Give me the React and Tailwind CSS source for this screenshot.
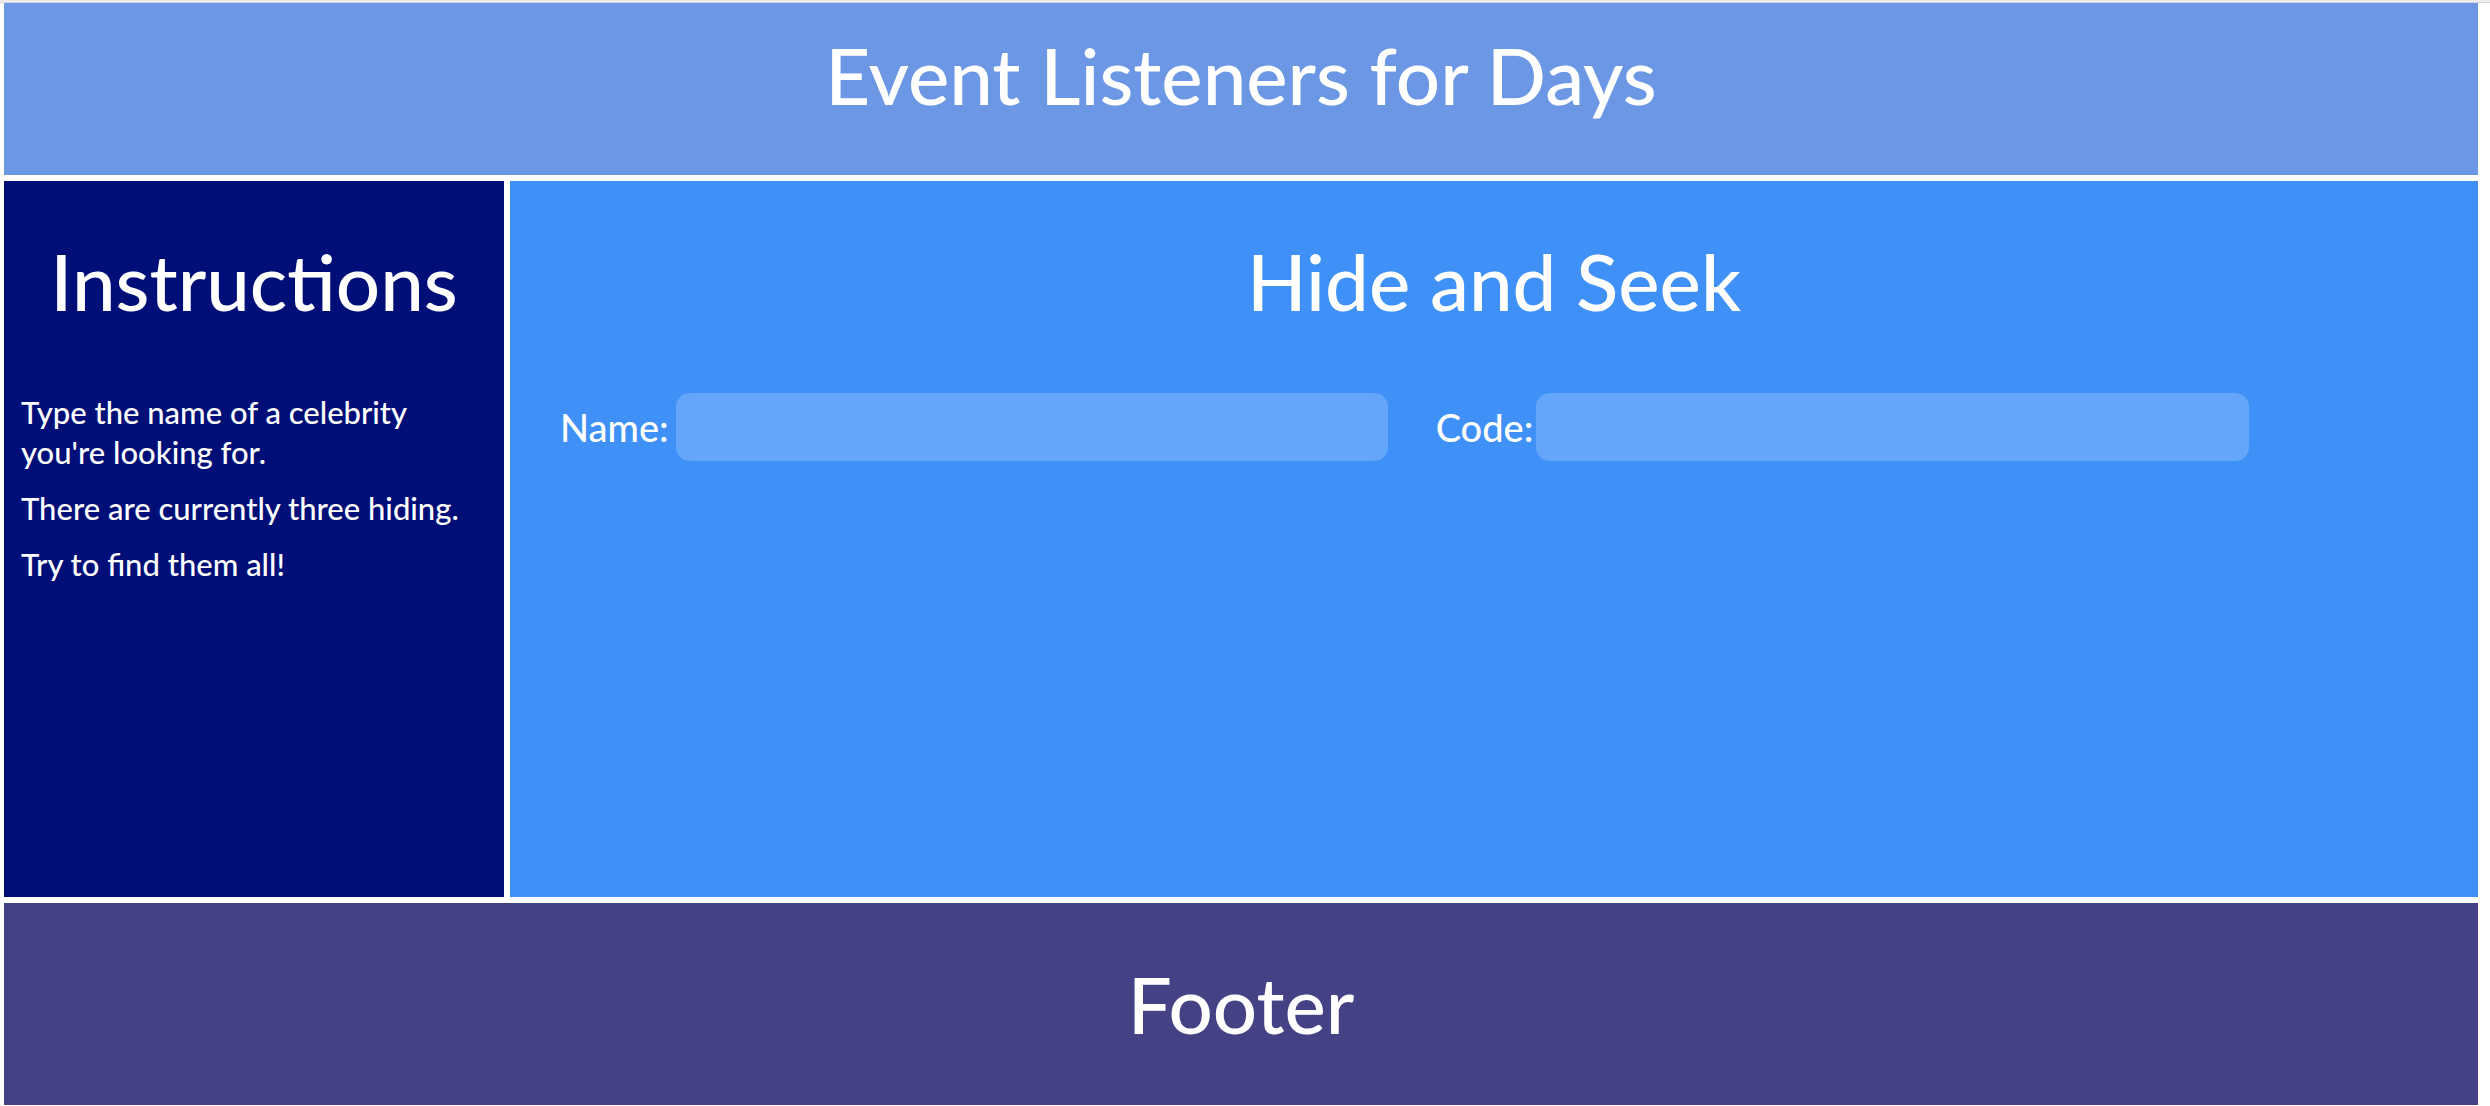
export default function App() {
  const font = { fontFamily: "Lato, 'Open Sans', sans-serif" };
  return (
    <div className="w-[2490px] h-[1106px] bg-white overflow-hidden text-white font-medium" style={font}>
      <div className="h-[3px] bg-[#ededed] border-b border-[#d4d4d4]"></div>
      <div className="pl-[4px] pr-[12px] flex flex-col gap-[6px]">
        <header className="h-[172px] bg-[#6c97e5] flex justify-center pt-[33px]">
          <h1 className="text-[78px] leading-none h-fit">Event Listeners for Days</h1>
        </header>
        <div className="h-[716px] flex gap-[6px]">
          <aside className="w-[500px] shrink-0 bg-[#000e77] px-[17px]">
            <h2 className="text-[78px] leading-none text-center pt-[61px]">Instructions</h2>
            <div className="mt-[72px] text-[31px] leading-[40px] flex flex-col gap-[16px]">
              <p>Type the name of a celebrity you're looking for.</p>
              <p>There are currently three hiding.</p>
              <p>Try to find them all!</p>
            </div>
          </aside>
          <main className="flex-1 bg-[#4091f7]">
            <h2 className="text-[78px] leading-none text-center pt-[61px]">Hide and Seek</h2>
            <div className="mt-[73px] flex items-center pl-[50px]">
              <label className="text-[38px] leading-none mr-[7px]">Name:</label>
              <input className="w-[712px] h-[68px] rounded-[14px] bg-[#64a7fa] outline-none" />
              <label className="text-[38px] leading-none ml-[48px] mr-[3px]">Code:</label>
              <input className="w-[713px] h-[68px] rounded-[14px] bg-[#64a7fa] outline-none" />
            </div>
          </main>
        </div>
        <footer className="h-[202px] bg-[#444184] flex items-center justify-center">
          <h2 className="text-[78px] leading-none">Footer</h2>
        </footer>
      </div>
    </div>
  );
}
